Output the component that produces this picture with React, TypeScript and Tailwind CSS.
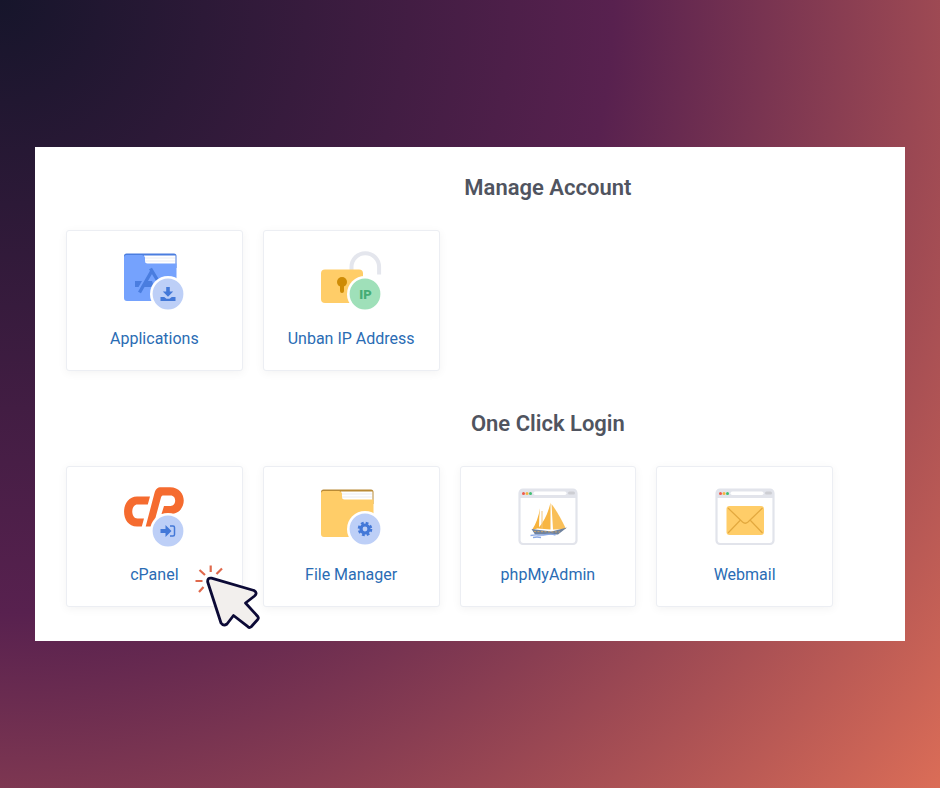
import type { ReactNode } from "react";

type Tile = {
  label: string;
  icon: ReactNode;
  pointer?: boolean;
};

type Group = {
  title: string;
  tiles: Tile[];
};

function Icon({ children }: { children: ReactNode }) {
  return (
    <svg viewBox="0 0 64 64" className="h-16 w-16" fill="none" aria-hidden>
      {children}
    </svg>
  );
}

/** Round badge in the lower right corner, with a white ring cut out of the icon. */
function Badge({ cy = 46, fill = "#bdcff7" }: { cy?: number; fill?: string }) {
  return (
    <>
      <circle cx="46" cy={cy} r="18" fill="#fff" />
      <circle cx="46" cy={cy} r="15.4" fill={fill} />
    </>
  );
}

function Folder({ back, front }: { back: string; front: string }) {
  return (
    <>
      <path d="M4.500 5.500H52A2.500 2.500 0 0 1 54.500 8V20H2V8a2.500 2.500 0 0 1 2.500-2.500Z" fill={back} />
      <path d="M22 7.500h31.500v9H22Z" fill="#fff" />
      <path d="M23 10h30M23 13h30" stroke="#e9ebf2" strokeWidth="1" />
      <path
        d="M2 9.500A2.500 2.500 0 0 1 4.500 7H20q2.500 0 3 2.500V13q0 2.500 2.500 2.500h29V50a3 3 0 0 1-3 3H5a3 3 0 0 1-3-3Z"
        fill={front}
      />
    </>
  );
}

function BrowserFrame() {
  return (
    <>
      <rect x="3.500" y="5.700" width="57" height="54.300" rx="3.500" fill="#fff" stroke="#e2e4eb" strokeWidth="2.200" />
      <path d="M3 14V9a4 4 0 0 1 4-4h50a4 4 0 0 1 4 4v5Z" fill="#e2e4eb" />
      <rect x="17.500" y="7.500" width="33" height="3.500" rx="1.700" fill="#fff" />
      <rect x="52" y="7.500" width="7" height="3" rx="1.500" fill="#cdced3" />
      <circle cx="7.500" cy="9.500" r="1.500" fill="#ee5a4c" />
      <circle cx="11" cy="9.500" r="1.500" fill="#f5b544" />
      <circle cx="14.500" cy="9.500" r="1.500" fill="#3fbf74" />
    </>
  );
}

function ApplicationsIcon() {
  return (
    <Icon>
      <Folder back="#4a7ddf" front="#75a2fd" />
      <path d="m28.500 20.500 12 20M29.500 23.500l-12 21" stroke="#4a7ddf" strokeWidth="3.400" />
      <path d="M13 33h7l-3.500 6H13Zm11 0h6l2 6H21Z" fill="#4a7ddf" />
      <Badge />
      <path d="M44.200 39h3.600v4.500h3.400L46 48.700l-5.200-5.200h3.400Z" fill="#4378d8" />
      <path d="M38.500 49h3.700l2.300 1.700h3l2.300-1.700h3.700v4h-15Z" fill="#4378d8" />
    </Icon>
  );
}

function UnbanIcon() {
  return (
    <Icon>
      <path d="M32.500 24v-5a13.800 13.800 0 0 1 27.600 0v7.500" stroke="#e4e6ed" strokeWidth="4" />
      <rect x="2" y="21.500" width="42" height="33.500" rx="4" fill="#ffcd68" />
      <circle cx="23" cy="34" r="5" fill="#ce8b06" />
      <path d="M23 36v7" stroke="#ce8b06" strokeWidth="4" strokeLinecap="round" />
      <Badge fill="#9fe0b9" />
      <text
        x="46.500"
        y="50.500"
        textAnchor="middle"
        className="font-['Roboto',sans-serif] text-[13px] font-black"
        fill="#45ad75"
      >
        IP
      </text>
    </Icon>
  );
}

function CpanelIcon() {
  return (
    <Icon>
      <path
        d="M28 12.500 25.800 20.500H15.500C8.500 20.500 8.500 34.500 15.500 34.500H22L19.800 42.500H15C-2.500 42.500-2 12.500 15 12.500Z"
        fill="#f56b2f"
      />
      <path
        d="M23.700 42.500 32.500 9C33.500 5 35.500 3.200 39 3.200H48C66.500 3.200 66 30 48.500 30H39.500L42 22H48.500C54.500 22 55 11.500 48.500 11.500H41.500C40 11.500 39.500 12 39 13.500L31.800 40C31.300 41.800 30.500 42.500 28.800 42.500Z"
        fill="#f56b2f"
      />
      <Badge cy={47} />
      <path d="M38.500 45h5v-4l6 6-6 6v-4h-5Z" fill="#4378d8" />
      <path d="M48 42h3a1.500 1.500 0 0 1 1.500 1.500v7A1.500 1.500 0 0 1 51 52h-3" stroke="#4378d8" strokeWidth="1.500" />
    </Icon>
  );
}

function FileManagerIcon() {
  return (
    <Icon>
      <Folder back="#b98a35" front="#ffcd68" />
      <Badge cy={45} />
      <circle cx="46" cy="45" r="4" stroke="#4378d8" strokeWidth="3.200" />
      <circle cx="46" cy="45" r="6" stroke="#4378d8" strokeWidth="2.600" strokeDasharray="2.700 2.012" />
    </Icon>
  );
}

function PhpMyAdminIcon() {
  return (
    <Icon>
      <BrowserFrame />
      <path d="M24 24q-1 10-1 20l-7 2q6-9 8-22Z" fill="#f7b33c" />
      <path d="M34.500 18.500v27L22 44.500q9-10 12.500-26Z" fill="#f8b642" />
      <path d="M35.500 20q7 9 14.500 25l-13 .500Z" fill="#f9bf58" />
      <path d="M26 27v18" stroke="#f3c77d" strokeWidth="1" />
      <path d="m15.500 45 20 2.500L51 43.500l-9 7H19Z" fill="#6f829e" />
      <path d="M18 47.500 44 48" stroke="#c9a36a" strokeWidth="1" strokeDasharray="2 1.500" />
      <path d="M14.500 51.500q5-1 8-.500t8-.500 9 .500M17 53.500q4-1 8 0" stroke="#8aa8e4" strokeWidth="1.400" />
    </Icon>
  );
}

function WebmailIcon() {
  return (
    <Icon>
      <BrowserFrame />
      <rect x="13.500" y="22" width="37.500" height="29" rx="3" fill="#ffcd68" />
      <path d="m15 24 14.500 14q2.700 2.500 5.500 0L49.500 24M15 49l12.500-13M49.500 49 37 36" stroke="#e3a93f" strokeWidth="1.200" />
    </Icon>
  );
}

function ClickPointer() {
  return (
    <svg
      viewBox="0 0 70 70"
      className="pointer-events-none absolute top-24 left-32 z-10 h-[70px] w-[70px]"
      fill="none"
      aria-hidden
    >
      <path
        d="m1.500 19h7M5.500 8l5.500 5M16.700 3.500V10M28 6.500 22.500 12M9.500 25 5 30"
        stroke="#e0694c"
        strokeWidth="2.200"
      />
      <path
        d="M17.500 16.200 60 28.500q4 2.500 .5 5.500L51.500 41l12.300 13.500q1.200 1.600-.3 3.200l-6.300 7q-1.700 1.500-3.300 0L39.500 53.500 33 62q-3.500 2.500-6-1L13.700 20q-.4-4.500 3.800-3.800Z"
        fill="#f2efed"
        stroke="#0c0a36"
        strokeWidth="2.800"
        strokeLinejoin="round"
      />
    </svg>
  );
}

const GROUPS: Group[] = [
  {
    title: "Manage Account",
    tiles: [
      { label: "Applications", icon: <ApplicationsIcon /> },
      { label: "Unban IP Address", icon: <UnbanIcon /> },
    ],
  },
  {
    title: "One Click Login",
    tiles: [
      { label: "cPanel", icon: <CpanelIcon />, pointer: true },
      { label: "File Manager", icon: <FileManagerIcon /> },
      { label: "phpMyAdmin", icon: <PhpMyAdminIcon /> },
      { label: "Webmail", icon: <WebmailIcon /> },
    ],
  },
];

function TileLink({ tile }: { tile: Tile }) {
  return (
    <div className="relative">
      <a
        href="#"
        className="flex flex-col items-center rounded-[3px] border border-[#eceef3] bg-white pt-[17px] pb-[19px] shadow-[0_2px_10px_rgba(0,0,0,0.05)]"
      >
        {tile.icon}
        <span className="mt-[15px] text-base leading-6 whitespace-nowrap text-[#2a6cb4]">{tile.label}</span>
      </a>
      {tile.pointer && <ClickPointer />}
    </div>
  );
}

export default function App() {
  return (
    <div className="flex min-h-screen items-center bg-[radial-gradient(circle_at_0_0,#16152b,#58214f_50%,#db6d57)] px-[35px] font-['Roboto',sans-serif]">
      <main className="flex w-full flex-col gap-[37px] bg-white pt-[25px] pr-[72px] pb-[34px] pl-[31px]">
        {GROUPS.map((group) => (
          <section key={group.title} className="grid grid-cols-4 gap-x-5">
            <h2 className="col-span-3 col-start-2 mb-[26px] text-center text-[22px] leading-8 font-semibold text-[#50545f]">
              {group.title}
            </h2>
            <div className="col-span-4 grid grid-cols-subgrid">
              {group.tiles.map((tile) => (
                <TileLink key={tile.label} tile={tile} />
              ))}
            </div>
          </section>
        ))}
      </main>
    </div>
  );
}
